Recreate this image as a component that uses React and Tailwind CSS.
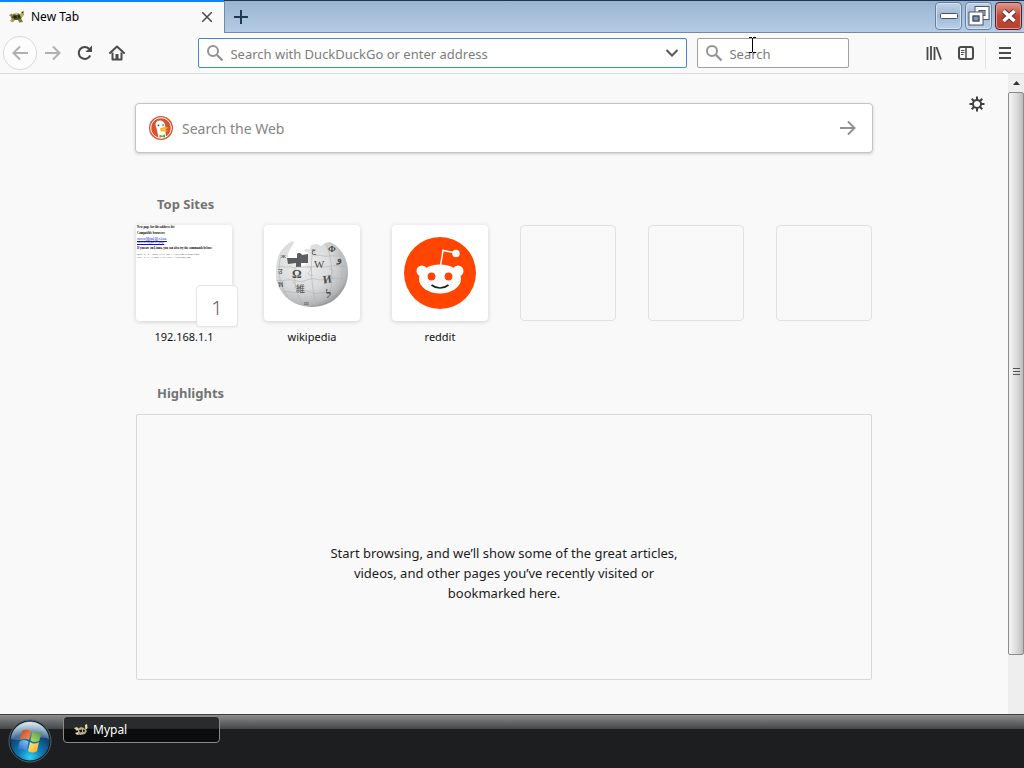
import { useState } from "react";

function MypalLogo({ className }) {
  return (
    <svg viewBox="0 0 18 16" className={className} aria-hidden="true">
      <path d="M3 8.500C4 4.500 8 3 11 4.500L14 8.500 12 11 5 11Z" fill="#55552a" />
      <path d="M1 6 4 4.500 5 6.500 3 8Z" fill="#8d8c4a" />
      <path d="M12 6 13 3 16 1.500 16 6 13.500 9Z" fill="#b4ad5c" />
      <path d="M5 5 8 3.500 11 4.500 9 6Z" fill="#d0c978" />
      <path d="M4 9 2 12 5 13.500 7 11Z" fill="#a6a24f" />
      <path d="M10 10.500 11 13.500 15 13 13.500 10Z" fill="#7c793b" />
      <path d="M5.500 7 8 6.500 9 9 6 9.500Z" fill="#20200f" />
      <path d="M9.500 6 12 6.500 12 9 10.500 9Z" fill="#292812" />
      <circle cx="14.500" cy="3.500" r=".7" fill="#222" />
    </svg>
  );
}

// lighter variant for the dark taskbar
function MypalTaskLogo() {
  return (
    <svg viewBox="0 0 16 16" className="size-4" aria-hidden="true">
      <path d="M1 6 4 5 6 7 4 9Z" fill="#d6cfae" />
      <path d="M5 7C7 4.500 10 5 12 7L14 9 12 12 7 13 5 11Z" fill="#b9b08a" />
      <path d="M12 3 14 2 14.500 6 12.500 8Z" fill="#efe6bf" />
      <path d="M6 8 9 7.500 9 10 7 10.500ZM10 7.500l2 .5-.5 2-1.500 0Z" fill="#1c1b12" />
      <path d="M2 11 5 10 6 13 3.500 12.500Z" fill="#e2d9b3" />
    </svg>
  );
}

function SearchIcon() {
  return (
    <svg viewBox="0 0 18 18" className="size-[18px] shrink-0" fill="none" stroke="#929292" strokeWidth="2" aria-hidden="true">
      <circle cx="7" cy="7" r="5" />
      <path d="m11 11 5.500 5.500" strokeWidth="2.300" />
    </svg>
  );
}

function BackIcon() {
  return (
    <svg viewBox="0 0 16 16" className="size-4" fill="none" stroke="currentColor" strokeWidth="2" aria-hidden="true">
      <path d="M16 8H1.500M8 1.500 1.500 8 8 14.500" />
    </svg>
  );
}

function ForwardIcon() {
  return (
    <svg viewBox="0 0 16 16" className="size-4" fill="none" stroke="currentColor" strokeWidth="2" aria-hidden="true">
      <path d="M0 8h14.500M8 1.500 14.500 8 8 14.500" />
    </svg>
  );
}

function ReloadIcon() {
  return (
    <svg viewBox="0 0 16 16" className="size-4" fill="none" stroke="#4a4a4a" strokeWidth="2" aria-hidden="true">
      <path d="M13.200 10.500A6 6 0 1 1 12.300 4" />
      <path d="M15 .500V7H8.500Z" fill="#4a4a4a" stroke="none" />
    </svg>
  );
}

function HomeIcon() {
  return (
    <svg viewBox="0 0 16 16" className="size-4" fill="none" stroke="#4a4a4a" strokeWidth="2" strokeLinejoin="round" aria-hidden="true">
      <path d="M1 8 8 1.500 15 8" strokeLinecap="round" />
      <path d="M3.500 7.500V14.500h9V7.500" />
      <path d="M6.500 14V9h3v5" fill="#4a4a4a" stroke="none" />
    </svg>
  );
}

function LibraryIcon() {
  return (
    <svg viewBox="0 0 16 16" className="size-4" fill="none" stroke="#4a4a4a" strokeWidth="2" aria-hidden="true">
      <path d="M1.500 2v13M5 1v14M8.500 2v13M10.500 2l4.500 12.500" strokeWidth="1.800" />
    </svg>
  );
}

function SidebarIcon() {
  return (
    <svg viewBox="0 0 16 16" className="size-4" fill="none" stroke="#4a4a4a" strokeWidth="2" aria-hidden="true">
      <rect x="1" y="2" width="14" height="12" rx="2" />
      <path d="M8 2v12" strokeWidth="1.500" />
      <path d="M3 5.500h3.500M3 7.500h3.500M3 9.500h2.500" strokeWidth="1" />
    </svg>
  );
}

function GearIcon() {
  return (
    <svg viewBox="0 0 16 16" className="size-4" fill="none" stroke="#3f3f3f" strokeWidth="2" aria-hidden="true">
      <circle cx="8" cy="8" r="4" />
      <path d="M8 4V.500M8 12v3.500M4 8H.500M12 8h3.500M5.200 5.200 2.700 2.700M10.800 10.800l2.500 2.500M10.800 5.200l2.500-2.500M5.200 10.800l-2.500 2.500" />
    </svg>
  );
}

function DuckLogo() {
  return (
    <svg viewBox="0 0 24 24" className="size-6 shrink-0" aria-hidden="true">
      <circle cx="12" cy="12" r="12" fill="#d9532f" />
      <circle cx="12" cy="12" r="10.300" fill="none" stroke="#fff" strokeWidth="1" />
      <path d="M7 6.500C8 4 13 3.500 15 6.500c1.500 2 1.300 4 1.200 5.500l.8 9.200C14 22.500 11 22 9.500 21.500L7.500 12C6.500 10 6 8.500 7 6.500Z" fill="#fff" />
      <circle cx="9.500" cy="9.300" r=".9" fill="#28466e" />
      <circle cx="14" cy="9" r=".8" fill="#28466e" />
      <path d="M11 12.500c2-1.500 5-1.500 8-1-1 1.500-3 2-5 2.300 2 .7 3.500.5 5 .2-1 1.800-6 2.200-7.500.7Z" fill="#fdb71c" />
      <path d="m10.500 18.500 2.500 1.200 3-1.500v3.500l-3-1-2.500 1Z" fill="#65a843" />
    </svg>
  );
}

function WikipediaGlobe() {
  return (
    <svg viewBox="0 0 96 96" className="size-24" role="img" aria-label="Wikipedia globe">
      <defs>
        <radialGradient id="globe" cx=".38" cy=".35" r=".72">
          <stop offset="0" stopColor="#f0f0f0" />
          <stop offset=".55" stopColor="#d9dadb" />
          <stop offset=".85" stopColor="#b5b6b7" />
          <stop offset="1" stopColor="#858686" />
        </radialGradient>
      </defs>
      <path
        d="M17 26C20 22 24 18 29 16l1 2-4 6-2 5 1 7 8 1 2 4h5l4-7V28l-4-2 1-2 5 0 1-4 6-1 4 2 4-3 5-1C77 22 84 34 84 47c0 20-16 35-36 35S12 68 12 48c0-9 1-16 5-22Z"
        fill="url(#globe)"
      />
      <path d="M23 33h10v-3c-1-2 4-3 5 0l6-1v9l-7 0v4h-5v-4l-8 1Z" fill="#5c5d60" />
      <g fill="none" stroke="#b0b0b0" strokeWidth=".6">
        <path d="M17 30c-4 14-2 30 7 42M31 43c-2 12 1 26 8 37M49 25c-3 14-2 38 4 56M62 19c7 16 8 38 2 58M75 27c5 14 4 28-2 41" />
        <path d="M14 42c4-2 7 1 10 0s6 2 9 0h16c5-3 8 1 13 0s8-2 20 0M12 55c6 2 10-1 16 0s8 3 15 0 9 0 14 0 12-3 25-1M19 67c6-2 9 2 15 0s10-1 15 1 10-2 17 0 6-1 10-2" />
        <path d="M43 42c4-2 5 3 2 5s1 4 4 3M65 44c4-2 5 3 2 5s1 4 4 3M28 58c3-2 5 3 2 5M50 31c3-1 6-1 9 0s8-1 14 0" />
      </g>
      <g fill="#4a4a4a" className="font-['Liberation_Serif']">
        <text x="28" y="53" fontSize="12" fontWeight="bold">Ω</text>
        <text x="50" y="43" fontSize="11">W</text>
        <text x="59" y="58" fontSize="11" fontWeight="bold" transform="rotate(-8 63 54)">И</text>
        <text x="32" y="67" fontSize="9" className="font-['Noto_Sans_CJK_JP']">維</text>
        <text x="62" y="73" fontSize="11" fontWeight="bold">ל</text>
        <text x="47" y="28" fontSize="8">ج</text>
        <text x="64" y="27" fontSize="9" fontWeight="bold">Ф</text>
        <text x="73" y="37" fontSize="10" fontWeight="bold">و</text>
        <text x="14" y="49" fontSize="8">उ</text>
        <text x="14" y="62" fontSize="8">พ</text>
        <text x="17" y="33" fontSize="7">ж</text>
        <text x="40" y="80" fontSize="6">ш</text>
      </g>
    </svg>
  );
}

function RedditLogo() {
  return (
    <svg viewBox="0 0 96 96" className="size-24" role="img" aria-label="Reddit logo">
      <circle cx="48" cy="48" r="36" fill="#ff4500" />
      <g fill="#fff">
        <circle cx="30" cy="46" r="5.500" />
        <circle cx="66" cy="46" r="5.500" />
        <ellipse cx="48" cy="54" rx="21" ry="14.500" />
        <circle cx="64" cy="28.500" r="3.700" />
      </g>
      <path d="m48.500 41 2.500-15.500 13 2.500" fill="none" stroke="#fff" strokeWidth="1.500" />
      <circle cx="39.500" cy="51.500" r="3.900" fill="#ff4500" />
      <circle cx="56.500" cy="51.500" r="3.900" fill="#ff4500" />
      <path d="M39.500 60c5 4 12 4 17 0" fill="none" stroke="#222" strokeWidth="1.700" />
    </svg>
  );
}

function WindowsOrb() {
  return (
    <svg viewBox="0 0 44 44" className="size-11" aria-hidden="true">
      <defs>
        <radialGradient id="orb" cx=".5" cy=".92" r=".85">
          <stop offset="0" stopColor="#2fd0f7" />
          <stop offset=".35" stopColor="#0d7cb6" />
          <stop offset=".75" stopColor="#124070" />
          <stop offset="1" stopColor="#8ba7bd" />
        </radialGradient>
        <linearGradient id="shine" x2="0" y2="1">
          <stop offset="0" stopColor="#e8f2f7" stopOpacity=".85" />
          <stop offset="1" stopColor="#7fa4bd" stopOpacity=".35" />
        </linearGradient>
        <linearGradient id="red" x2="1" y2="1">
          <stop offset="0" stopColor="#c93f1c" />
          <stop offset="1" stopColor="#f49a5a" />
        </linearGradient>
        <linearGradient id="green" x1="1" x2="0" y2="1">
          <stop offset="0" stopColor="#4f9b2b" />
          <stop offset="1" stopColor="#b5dc78" />
        </linearGradient>
        <linearGradient id="blue" y1="1" x2="1" y2="0">
          <stop offset="0" stopColor="#1c63bd" />
          <stop offset="1" stopColor="#8ccdf5" />
        </linearGradient>
        <linearGradient id="yellow" x1="1" y1="1" x2="0" y2="0">
          <stop offset="0" stopColor="#f5a81c" />
          <stop offset="1" stopColor="#ffe98a" />
        </linearGradient>
      </defs>
      <circle cx="22" cy="22" r="21" fill="#101820" stroke="#51636d" strokeWidth="1" />
      <circle cx="22" cy="22" r="19.500" fill="url(#orb)" />
      <path d="M3 20C5 7 15 3 22 3s17 4 19 17c-12-5-25 4-38 0Z" fill="url(#shine)" />
      <path d="M14 12c3-2 6-2 9 0l-2 9c-3-2-6-2-9 0Z" fill="url(#red)" />
      <path d="M24.500 12.500c3 2 6 2 9 0l-2 9c-3 2-6 2-9 0Z" fill="url(#green)" />
      <path d="M11.500 22.500c3-2 6-2 9 0l-2 9c-3-2-6-2-9 0Z" fill="url(#blue)" />
      <path d="M22 23c3 2 6 2 9 0l-2 9c-3 2-6 2-9 0Z" fill="url(#yellow)" />
    </svg>
  );
}

function Thumbnail() {
  return (
    <div className="size-full rounded bg-white pl-px font-['Liberation_Serif'] text-[3px] leading-[3px] text-black">
      <p className="pt-px font-bold">New page for this address list</p>
      <p className="mt-[3px] font-bold">Compatible browsers:</p>
      <p className="mt-[3px] text-[#1010cc] underline">
        current Mypal 68 release
        <br />
        current Mypal 29 page
      </p>
      <p className="mt-[3px] font-bold">If you are on Linux, you can also try the commands below:</p>
      <p className="mt-[3px] font-['Liberation_Mono'] text-[2px] text-[#444]">
        wget -q -O - http://192.168.1.1/current/release/page
        <br />
        curl -s -L -o http://192.168.1.1/current/page
      </p>
    </div>
  );
}

const sites = [
  { title: "192.168.1.1", badge: "1", art: <Thumbnail /> },
  { title: "wikipedia", art: <WikipediaGlobe /> },
  { title: "reddit", art: <RedditLogo /> },
];

const windowButton =
  "flex h-7 w-[27px] items-center justify-center rounded-sm border border-[#667f9f] bg-linear-to-b from-[#c0d2e6] via-[#9fb8d4] to-[#b9d0e8] shadow-[inset_0_0_0_1px_#d5e2ef]";

function TitleBar() {
  return (
    <header className="flex h-[33px] border-t border-[#1d3557] bg-linear-to-b from-[#9ab4d0] to-[#b5cde7]">
      <div className="-mt-px flex w-56 items-center border-t-2 border-[#0a84ff] bg-[#f9f9fa] pb-px pl-2 pr-[7px]">
        <MypalLogo className="h-4 w-[18px]" />
        <span className="ml-[5px] flex-1 text-black">New Tab</span>
        <button aria-label="Close tab" className="flex size-5 items-center justify-center">
          <svg viewBox="0 0 10 10" className="size-[10px]" stroke="#4a4a4a" strokeWidth="1.500">
            <path d="m0 0 10 10M10 0 0 10" />
          </svg>
        </button>
      </div>
      <div className="flex flex-1 border-b border-l border-[#7489a3]">
        <button aria-label="Open a new tab" className="flex w-8 items-center justify-center">
          <svg viewBox="0 0 14 14" className="size-[14px]" stroke="#1d3a52" strokeWidth="2">
            <path d="M7 0v14M0 7h14" />
          </svg>
        </button>
        <div className="ml-auto flex gap-[3px] pr-[2px] pt-px">
          <button aria-label="Minimize" className={windowButton}>
            <svg viewBox="0 0 18 6" className="h-[6px] w-[18px]">
              <rect x=".5" y=".5" width="17" height="5" rx="1" fill="#fff" stroke="#47536a" />
            </svg>
          </button>
          <button aria-label="Restore" className={windowButton}>
            <svg viewBox="0 0 22 20" className="h-5 w-[22px]" fill="none">
              <rect x="9" y="2.500" width="10" height="9" stroke="#47536a" strokeWidth="5" />
              <rect x="9" y="2.500" width="10" height="9" stroke="#fff" strokeWidth="3" />
              <rect x="3" y="8" width="10" height="9" fill="#7f96b4" stroke="#47536a" strokeWidth="5" />
              <rect x="3" y="8" width="10" height="9" stroke="#fff" strokeWidth="3" />
              <rect x="5" y="10" width="6" height="5" stroke="#47536a" />
            </svg>
          </button>
          <button
            aria-label="Close"
            className="flex h-7 w-[27px] items-center justify-center rounded-sm border border-[#571c24] bg-linear-to-b from-[#dc9a90] via-[#bd4736] to-[#b8402f] shadow-[inset_0_0_0_1px_#df9a91]"
          >
            <svg viewBox="0 0 18 16" className="h-4 w-[18px]">
              <path d="m3.500 3 11 10m0-10-11 10" stroke="#5a3034" strokeWidth="5.500" />
              <path d="m3.500 3 11 10m0-10-11 10" stroke="#fff" strokeWidth="3.700" />
            </svg>
          </button>
        </div>
      </div>
    </header>
  );
}

function Toolbar() {
  return (
    <nav className="flex h-[41px] items-center border-b border-[#dedede] bg-[#f9f9fa]">
      <div className="flex flex-8 items-center">
        <button
          aria-label="Back"
          className="ml-[3px] flex size-[34px] items-center justify-center rounded-full border border-[#d8d8d8] bg-[#fcfcfc] text-[#b0b0b0]"
        >
          <BackIcon />
        </button>
        <div className="ml-2 flex gap-4">
          <button aria-label="Forward" className="text-[#b0b0b0]"><ForwardIcon /></button>
          <button aria-label="Reload"><ReloadIcon /></button>
          <button aria-label="Home"><HomeIcon /></button>
        </div>
      </div>
      <div className="flex h-[30px] w-[489px] items-center rounded-xs border border-[#3c8fce] bg-white pl-[7px] pr-2">
        <SearchIcon />
        <input
          aria-label="Address"
          placeholder="Search with DuckDuckGo or enter address"
          className="ml-[6px] min-w-0 flex-1 pt-[3px] text-[13px] outline-none placeholder:text-[#7c7c7c]"
        />
        <button aria-label="Show history">
          <svg viewBox="0 0 12 8" className="h-2 w-3" fill="none" stroke="#5c5c5c" strokeWidth="2">
            <path d="m.5 1 5.500 5.500L11.500 1" />
          </svg>
        </button>
      </div>
      <div className="relative ml-[10px] flex h-[30px] w-[152px] items-center rounded-xs border border-[#a0a0a0] bg-white px-[7px]">
        <SearchIcon />
        <input
          aria-label="Search"
          placeholder="Search"
          className="ml-[6px] min-w-0 flex-1 pt-[3px] text-[13px] outline-none placeholder:text-[#7c7c7c]"
        />
        {/* text cursor */}
        <svg viewBox="0 0 7 16" className="absolute -top-[2px] left-[51px] h-4 w-[7px]" fill="none" stroke="#000">
          <path d="M0 .5h3M4 .5h3M3.500 1v14M0 15.500h3M4 15.500h3" />
        </svg>
      </div>
      <div className="flex flex-7 items-center justify-end pr-px">
        <button aria-label="Library" className="mr-4"><LibraryIcon /></button>
        <button aria-label="Sidebars" className="mr-[11px]"><SidebarIcon /></button>
        <button aria-label="Open menu" className="flex h-8 w-[38px] items-center justify-center border-l border-[#e2e2e2]">
          <svg viewBox="0 0 12 12" className="size-3" stroke="#4a4a4a" strokeWidth="2">
            <path d="M0 1h12M0 6h12M0 11h12" />
          </svg>
        </button>
      </div>
    </nav>
  );
}

function ScrollBar() {
  return (
    <div className="flex w-4 flex-col bg-[#eeeeee]">
      <button aria-label="Scroll up" className="flex h-[18px] items-center justify-center">
        <svg viewBox="0 0 7 4" className="h-1 w-[7px]" fill="#333">
          <path d="M0 4 3.500 0 7 4Z" />
        </svg>
      </button>
      <div className="flex h-[88%] items-center justify-center rounded-xs border border-[#8b8b8b] bg-linear-to-r from-[#f4f4f4] via-[#dedede] to-[#bcbcbc] pb-[3px]">
        <svg viewBox="0 0 7 8" className="h-2 w-[7px]" stroke="#555">
          <path d="M0 .5h7M0 3.500h7M0 6.500h7" />
        </svg>
      </div>
    </div>
  );
}

function TopSites() {
  return (
    <section className="mt-[41px]">
      <h2 className="ml-[21px] text-[13px] font-bold leading-5 text-[#737373]">Top Sites</h2>
      <ul className="mt-[11px] grid grid-cols-6 gap-8">
        {sites.map((site) => (
          <li key={site.title}>
            <a href="#" className="block">
              <div className="relative h-24 rounded bg-white shadow-[0_1px_4px_#d0d0d0]">
                {site.art}
                {site.badge && (
                  <span className="absolute -bottom-[6px] -right-[6px] flex size-[42px] items-center justify-center rounded border border-[#e5e5e5] bg-white pt-1 text-xl font-light text-[#666] shadow-xs">
                    {site.badge}
                  </span>
                )}
              </div>
              <span className="mt-[6px] block text-center text-[11px] leading-5 text-[#111]">{site.title}</span>
            </a>
          </li>
        ))}
        {[1, 2, 3].map((n) => (
          <li key={n} className="h-24 rounded border border-[#e1e1e1]" />
        ))}
      </ul>
    </section>
  );
}

function NewTabPage() {
  const [query, setQuery] = useState("");

  return (
    <main className="relative flex-1 bg-[#f9f9fa] pt-[29px]">
      <button aria-label="Customize your New Tab page" className="absolute right-[23px] top-[22px]">
        <GearIcon />
      </button>
      <div className="mx-auto w-[736px] max-w-full">
        <form
          onSubmit={(e) => e.preventDefault()}
          className="-mx-px flex h-[50px] items-center rounded border border-[#c4c4c4] bg-white pl-[13px] pr-4 shadow-[0_1px_3px_#cccccc]"
        >
          <DuckLogo />
          <input
            aria-label="Search the Web"
            placeholder="Search the Web"
            value={query}
            onChange={(e) => setQuery(e.target.value)}
            className="ml-[9px] min-w-0 flex-1 pt-px text-sm outline-none placeholder:text-[#858585]"
          />
          <button aria-label="Search" className="text-[#929292]">
            <ForwardIcon />
          </button>
        </form>
        <TopSites />
        <section className="mt-9">
          <h2 className="ml-[21px] text-[13px] font-bold leading-5 text-[#737373]">Highlights</h2>
          <div className="mt-[11px] flex h-[266px] justify-center rounded-xs border border-[#d8d8d8] pt-32">
            <p className="w-[350px] text-center text-[13px] leading-5 text-[#1b1b1b]">
              Start browsing, and we’ll show some of the great articles, videos, and other pages you’ve recently visited or
              bookmarked here.
            </p>
          </div>
        </section>
      </div>
    </main>
  );
}

function Taskbar() {
  return (
    <footer className="h-[54px] border-t border-[#404040] bg-[#1c1e1f]">
      <div className="flex h-[53px] items-start bg-linear-to-b from-[#8e8e8e] from-0% via-[#454748] via-26% to-[#1c1e1f] to-27% pl-2">
        <button aria-label="Start" className="mt-1"><WindowsOrb /></button>
        <button className="ml-[11px] mt-px flex h-[27px] w-[157px] items-center rounded border border-[#8a8a8a] bg-linear-to-b from-[#292b2c] from-45% to-[#0b0c0d] to-50% pl-[9px] text-white">
          <MypalTaskLogo />
          <span className="ml-1">Mypal</span>
        </button>
      </div>
    </footer>
  );
}

export default function App() {
  return (
    <div className="flex min-h-screen flex-col bg-[#f9f9fa] font-['Noto_Sans',sans-serif] text-xs">
      <TitleBar />
      <Toolbar />
      <div className="flex flex-1">
        <NewTabPage />
        <ScrollBar />
      </div>
      <Taskbar />
    </div>
  );
}
